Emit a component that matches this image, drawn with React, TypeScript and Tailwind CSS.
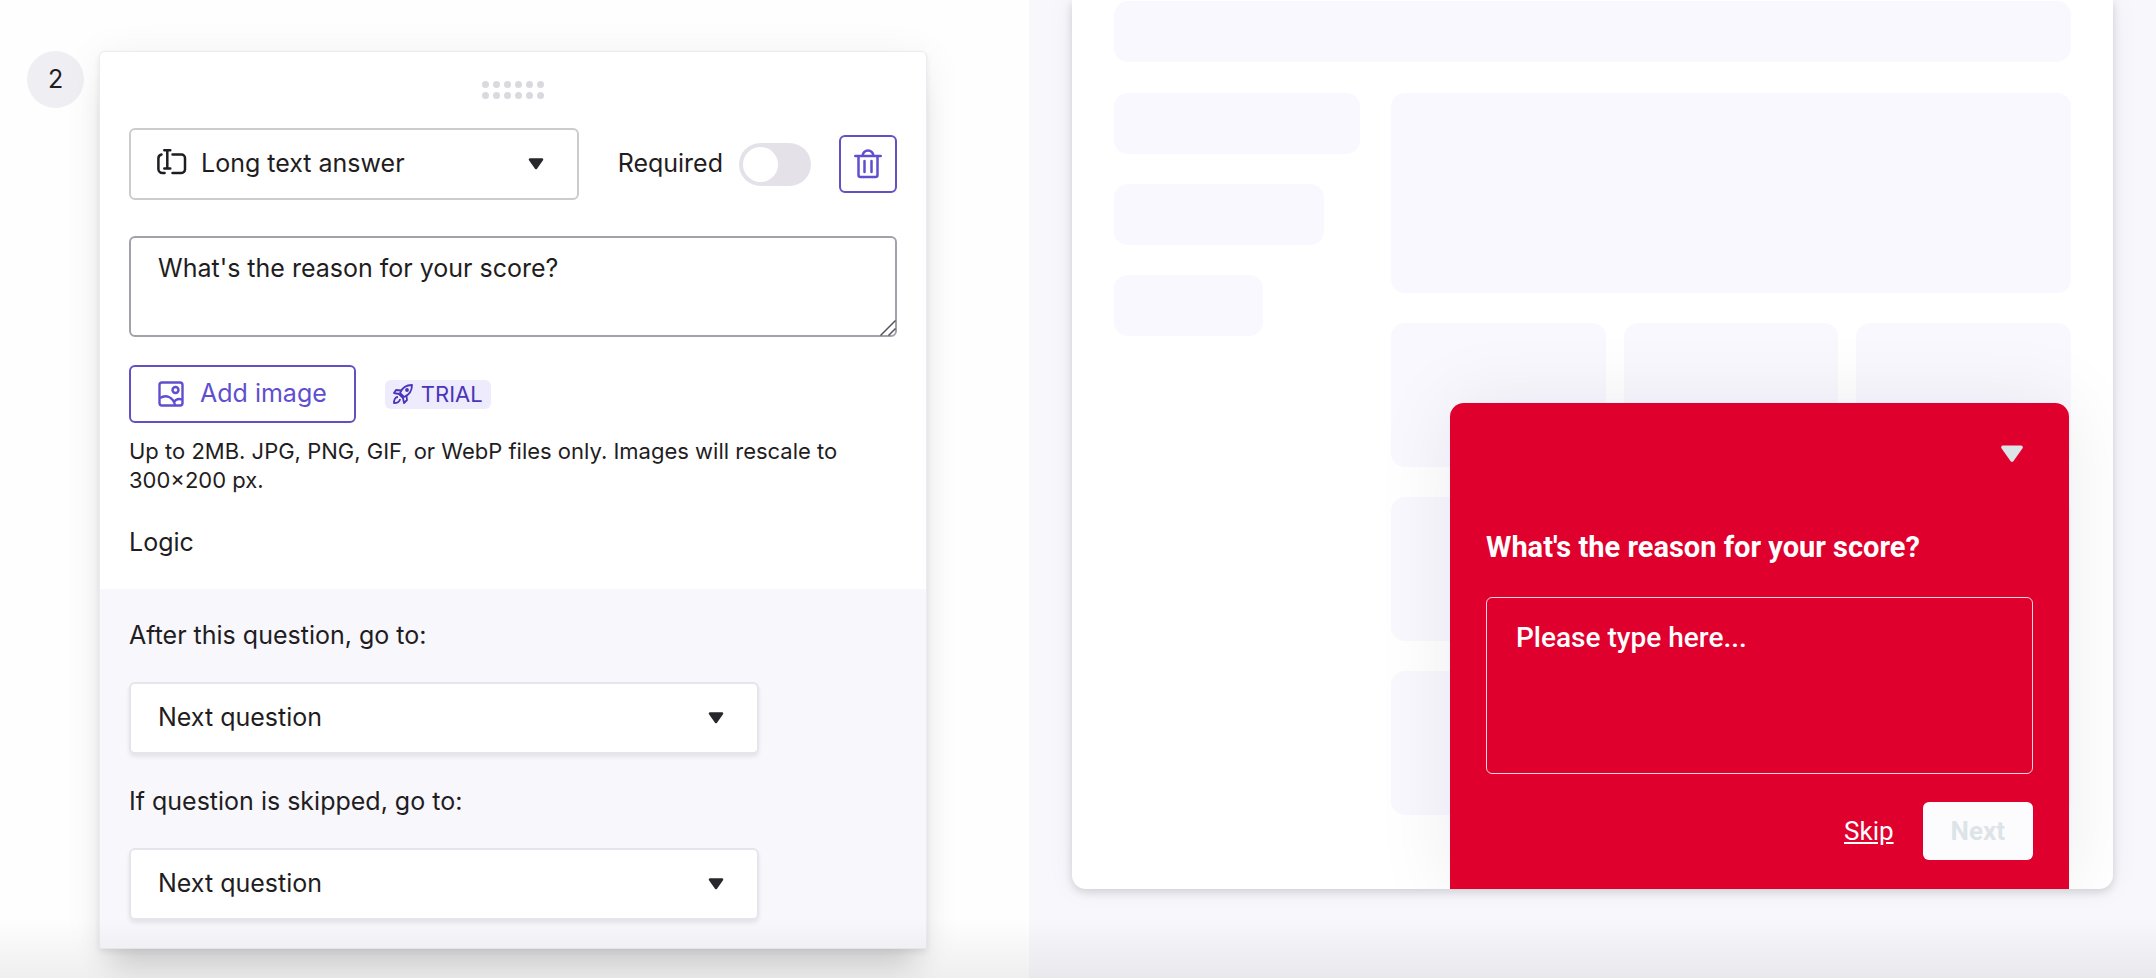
import { useState } from "react";

const destinations = ["Next question", "End of survey"];

function Caret({ className }: { className: string }) {
  return (
    <svg viewBox="0 0 16 12" aria-hidden="true" className={className}>
      <path d="M2 1.500h12L8 10z" fill="currentColor" stroke="currentColor" strokeWidth="2.500" strokeLinejoin="round" />
    </svg>
  );
}

function TextFieldIcon() {
  return (
    <svg
      viewBox="0 0 30 26"
      aria-hidden="true"
      className="h-[26px] w-[30px]"
      fill="none"
      stroke="currentColor"
      strokeWidth="2.5"
      strokeLinecap="round"
    >
      <path d="M7.300 1.300h6M10.300 1.300v18.200M7.300 19.500h6M4.500 5.500a4 4 0 0 0-3.100 4V20a4 4 0 0 0 4 4h2.200M15.500 5.500h9a3.500 3.500 0 0 1 3.500 3.500v11.500a3.500 3.500 0 0 1-3.500 3.500h-9" />
    </svg>
  );
}

function TrashIcon() {
  return (
    <svg
      viewBox="0 0 28 30"
      aria-hidden="true"
      className="h-[30px] w-7"
      fill="none"
      stroke="currentColor"
      strokeWidth="2.5"
      strokeLinecap="round"
      strokeLinejoin="round"
    >
      <path d="M1.300 7h25.400M8.500 7a5.500 5.500 0 0 1 11 0M4.500 7v19a2 2 0 0 0 2 2h15a2 2 0 0 0 2-2V7M10.500 12v11M17.500 12v11" />
    </svg>
  );
}

function ImageIcon() {
  return (
    <svg viewBox="0 0 26 26" aria-hidden="true" className="size-[26px]" fill="none" stroke="currentColor" strokeWidth="2.4">
      <rect x="1.500" y="1.500" width="23" height="23" rx="2.500" />
      <circle cx="17.500" cy="9" r="3" />
      <path d="M2 17c6-4 13-1 15 7M16 21c2-3 5-3.500 8-2.500" />
    </svg>
  );
}

function RocketIcon() {
  return (
    <svg
      viewBox="0 0 20 20"
      aria-hidden="true"
      className="size-5"
      fill="none"
      stroke="currentColor"
      strokeWidth="1.800"
      strokeLinejoin="round"
    >
      <path d="M7 9c2-5 6-8 12-8 0 6-3 10-8 12zM8 6.500L3 6 1 9l5 1M13.500 12l.5 4-3 3-1-5M5 13c-3 0-4 3-4 6 3 0 6-1 6-4M6 10l4 4" />
      <circle cx="14" cy="6" r="1" />
    </svg>
  );
}

function DestinationSelect({ id, label }: { id: string; label: string }) {
  return (
    <div>
      <label htmlFor={id} className="block leading-8">
        {label}
      </label>
      <div className="relative mt-[31px] max-w-[630px]">
        <select
          id={id}
          className="h-[72px] w-full appearance-none rounded-md border-2 border-[#e6e5ec] bg-white px-[27px] shadow-[0_3px_4px_rgba(0,0,0,0.08)]"
        >
          {destinations.map((item) => (
            <option key={item}>{item}</option>
          ))}
        </select>
        <Caret className="pointer-events-none absolute top-[30px] right-[35px] h-3 w-4 text-[#29272c]" />
      </div>
    </div>
  );
}

function QuestionEditor({ question, onChange }: { question: string; onChange: (value: string) => void }) {
  const [required, setRequired] = useState(false);

  return (
    <article className="min-w-0 flex-1 rounded-t-md border border-[#ecebf1] bg-white shadow-[0_4px_40px_rgba(30,20,60,0.06),0_3px_6px_rgba(0,0,0,0.08),0_30px_30px_-12px_rgba(0,0,0,0.14)]">
      <div className="px-[29px] pt-[29px]">
        <button type="button" aria-label="Move question" className="mx-auto grid w-fit grid-cols-6 gap-1 text-[#dad9df]">
          {Array.from({ length: 12 }, (_, index) => (
            <span key={index} className="size-[7px] rounded-full bg-current" />
          ))}
        </button>

        <div className="mt-[29px] flex items-center">
          <div className="relative w-[450px]">
            <span className="pointer-events-none absolute top-[21px] left-7">
              <TextFieldIcon />
            </span>
            <select
              aria-label="Question type"
              className="h-[72px] w-full appearance-none rounded-md border-2 border-[#cccccc] bg-white pl-[70px]"
            >
              <option>Long text answer</option>
              <option>Short text answer</option>
            </select>
            <Caret className="pointer-events-none absolute top-[30px] right-[35px] h-3 w-4 text-[#29272c]" />
          </div>
          <label className="ml-auto flex items-center gap-4">
            Required
            <input
              type="checkbox"
              role="switch"
              checked={required}
              onChange={(event) => setRequired(event.target.checked)}
              className="h-[43px] w-[72px] appearance-none rounded-full bg-[#e4e2e8] p-1 before:block before:size-[35px] before:rounded-full before:bg-white checked:bg-[#5e4dcf] checked:before:ml-[29px]"
            />
          </label>
          <button
            type="button"
            aria-label="Delete question"
            className="ml-7 flex size-[58px] items-center justify-center rounded-md border-2 border-[#6450c0] text-[#5f4fd0]"
          >
            <TrashIcon />
          </button>
        </div>

        <div className="relative mt-9">
          <textarea
            aria-label="Question"
            value={question}
            onChange={(event) => onChange(event.target.value)}
            className="block h-[101px] w-full resize-none rounded-md border-2 border-[#a3a2ac] px-[27px] py-3 leading-9"
          />
          <svg
            viewBox="0 0 18 18"
            aria-hidden="true"
            className="pointer-events-none absolute right-0 bottom-0 size-[18px]"
            fill="none"
            stroke="#555459"
            strokeWidth="1.500"
          >
            <path d="M1.500 16.500l15-15M9.500 16.500l7-7" />
          </svg>
        </div>

        <div className="mt-7 flex items-center gap-[29px]">
          <button
            type="button"
            className="flex h-[58px] items-center gap-4 rounded-md border-2 border-[#6450c0] px-[27px] text-[#5f4fd0]"
          >
            <ImageIcon />
            Add image
          </button>
          <span className="flex h-[29px] items-center gap-2 rounded-md bg-[#eeebfd] px-2 text-[22px] text-[#4a35b8]">
            <RocketIcon />
            TRIAL
          </span>
        </div>

        <p className="mt-[14px] text-[22px] leading-[29px]">
          Up to 2MB. JPG, PNG, GIF, or WebP files only. Images will rescale to 300×200 px.
        </p>
        <h2 className="mt-[29px] leading-9">Logic</h2>
      </div>

      <div className="mt-[29px] space-y-[31px] bg-[#f8f7fc] px-[29px] pt-[30px] pb-7">
        <DestinationSelect id="after-question" label="After this question, go to:" />
        <DestinationSelect id="question-skipped" label="If question is skipped, go to:" />
      </div>
    </article>
  );
}

function SurveyWidget({ question }: { question: string }) {
  return (
    <form className="absolute right-11 bottom-0 w-[619px] rounded-t-[14px] bg-[#e0002d] px-9 pt-10 pb-[29px] font-[Roboto,sans-serif] text-white shadow-[0_0_80px_rgba(20,20,60,0.08)]">
      <button type="button" aria-label="Minimise" className="mr-[9px] ml-auto block py-[2px] text-[#dce4e8]">
        <Caret className="h-[18px] w-6" />
      </button>
      <label htmlFor="answer" className="mt-16 block text-[29px] leading-9 font-bold">
        {question}
      </label>
      <textarea
        id="answer"
        placeholder="Please type here..."
        className="mt-8 block h-[177px] w-full resize-none rounded-md border border-[#f7d5dc] px-[29px] py-[22px] text-[28px] leading-9 font-medium placeholder:text-white"
      />
      <div className="mt-7 flex items-center justify-end gap-[29px] text-[26px]">
        <button type="button" className="underline">
          Skip
        </button>
        <button type="submit" disabled className="h-[58px] rounded-md bg-[#fcfcfe] px-7 font-bold text-[#dce4e8]">
          Next
        </button>
      </div>
    </form>
  );
}

function PagePreview({ question }: { question: string }) {
  return (
    <section className="relative h-[889px] overflow-hidden rounded-b-[14px] bg-white px-[42px] pt-px shadow-[0_3px_10px_rgba(0,0,0,0.15),0_0_30px_rgba(30,20,60,0.05)]">
      <div className="h-[61px] rounded-[14px] bg-[#f9f8fe]" />
      <div className="mt-[31px] flex gap-[31px]">
        <div className="w-[246px] space-y-[30px]">
          <div className="h-[61px] rounded-[14px] bg-[#f9f8fe]" />
          <div className="h-[61px] w-[210px] rounded-[14px] bg-[#f9f8fe]" />
          <div className="h-[61px] w-[149px] rounded-[14px] bg-[#f9f8fe]" />
        </div>
        <div className="flex-1">
          <div className="h-[200px] rounded-[14px] bg-[#f9f8fe]" />
          <div className="mt-[30px] grid grid-cols-3 gap-x-[18px] gap-y-[30px]">
            {Array.from({ length: 9 }, (_, index) => (
              <div key={index} className="h-36 rounded-[14px] bg-[#f9f8fe]" />
            ))}
          </div>
        </div>
      </div>
      <SurveyWidget question={question} />
    </section>
  );
}

export default function App() {
  const [question, setQuestion] = useState("What's the reason for your score?");

  return (
    <main className="relative grid min-h-screen grid-cols-[1029fr_1127fr] overflow-hidden font-[Inter,sans-serif] text-[25px] text-[#1f1d22]">
      <div className="flex items-start gap-[15px] bg-[#fefefe] pt-[51px] pr-[102px] pb-6 pl-[27px]">
        <span className="flex size-[57px] shrink-0 items-center justify-center rounded-full bg-[#efeef3]">2</span>
        <QuestionEditor question={question} onChange={setQuestion} />
      </div>
      <div className="bg-[#f8f7fc] px-[43px]">
        <PagePreview question={question} />
      </div>
      <div className="pointer-events-none absolute inset-x-0 bottom-0 h-[60px] bg-linear-to-t from-black/6 to-transparent" />
    </main>
  );
}
